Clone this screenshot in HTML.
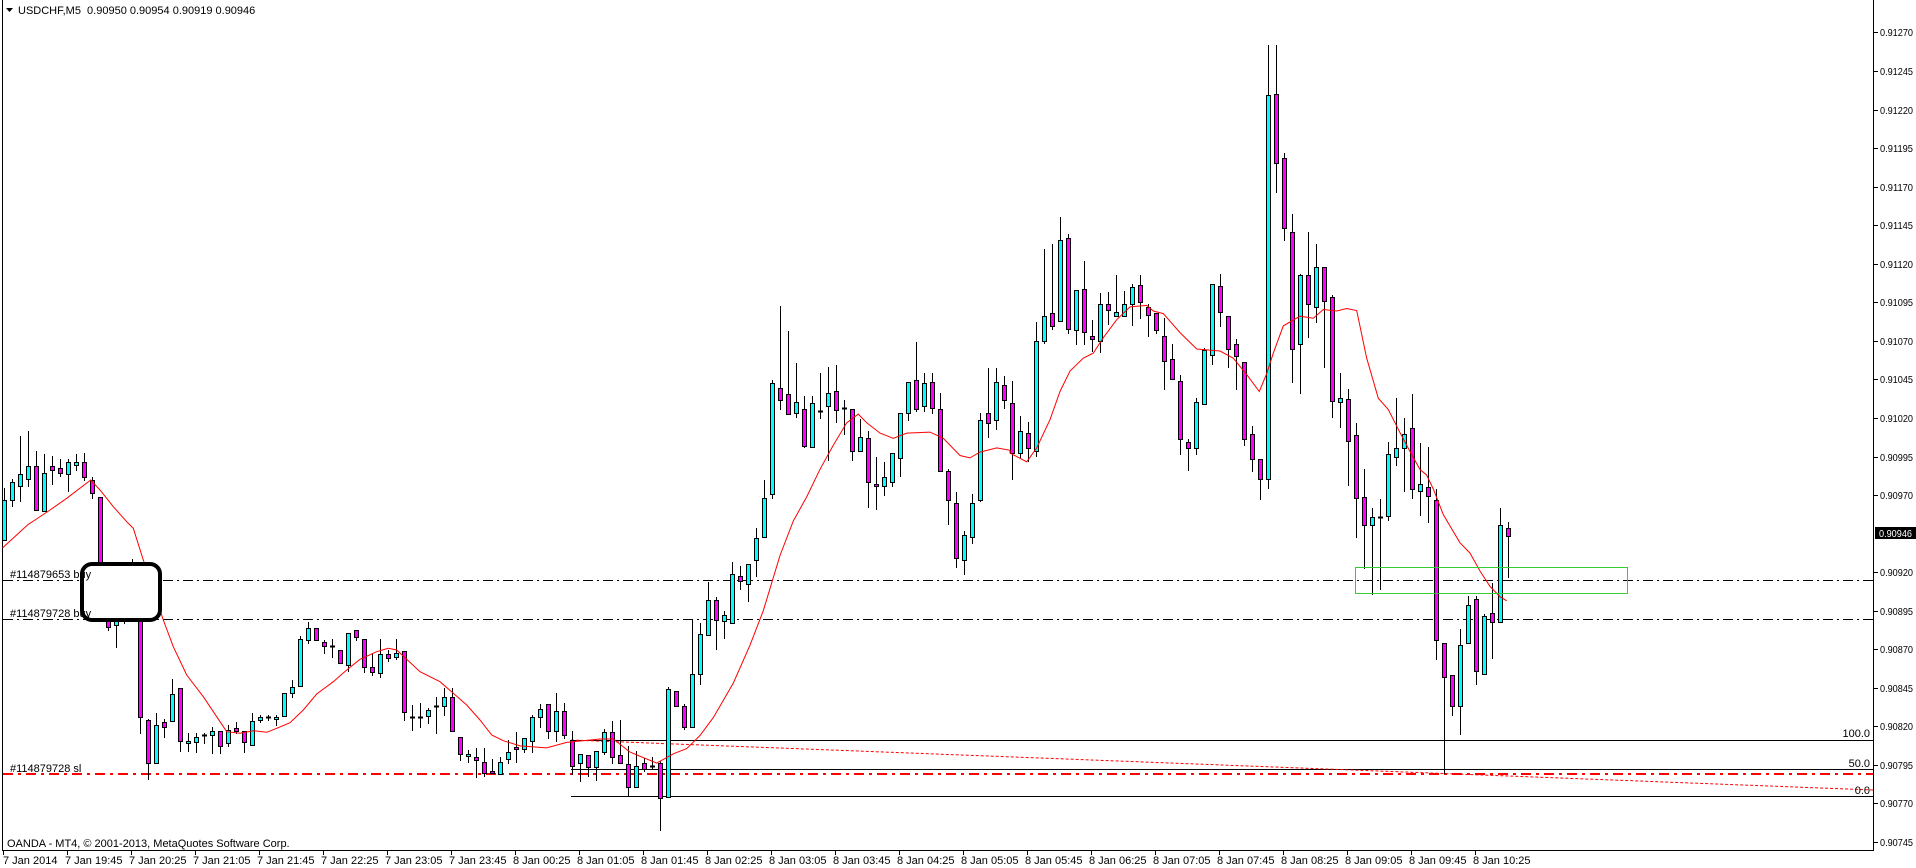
<!DOCTYPE html>
<html><head><meta charset="utf-8">
<style>
html,body{margin:0;padding:0;background:#fff;width:1916px;height:868px;overflow:hidden}
svg{display:block}
text{font-family:"Liberation Sans",sans-serif;font-size:11px;fill:#000}
</style></head>
<body>
<svg id="s" width="1916" height="868" xmlns="http://www.w3.org/2000/svg">
<rect width="1916" height="868" fill="#fff"/>
<g id="g"></g>
</svg>
<script>
var s1=[
['C',240,360,205,360],['C',187,240,178,257],['C',163,197,48,242],['C',139,178,33,197],
['M',139,270,93,270],['C',160,274,102,274],['M',139,151,108,192],['M',145,160,118,169],
['C',127,163,118,212],['C',127,136,102,151],['M',127,172,99,180],['M',181,220,172,233],
['M',230,560,230,560],['M',600,620,595,630],['C',600,615,595,680],['D',590,592,570,610],
['M',440,540,418,560],['M',540,890,530,940],
['M',900,1030,897,1078],['C',915,1028,880,1028],['M',907,920,898,952],['C',823,902,778,902],
['M',805,962,805,992],['C',962,970,940,992],['C',952,967,940,995],['D',945,946,940,970],
['C',932,944,920,1000],['M',934,978,934,1000],['C',930,970,915,978],['M',925,932,907,940],
['M',934,967,934,995],['C',902,976,880,976],['C',892,900,885,907],['D',892,893,885,900],
['C',892,898,885,915],['C',820,889,820,889],['C',800,820,780,832],['C',658,799,648,799],
['C',625,660,605,670],['M',625,660,625,660],['M',667,677,660,700],['D',679,680,658,710],
['M',690,730,690,730],['C',640,735,640,752],['M',631,652,631,660],['M',658,740,658,755],
['M',740,755,700,765],['C',703,760,658,770],['M',703,713,690,722],['C',700,712,658,718],
['M',693,875,693,900],['D',890,891,855,930],['D',890,891,850,920],['C',870,889,865,910],
['D',858,859,830,940],['C',832,858,805,885],['M',832,934,805,934],['M',950,1002,950,1020],
['C',1002,1008,990,1025],['M',1010,1020,985,1070],['M',1027,1060,985,1068],['M',1053,1060,1018,1060],
['C',1027,1062,1010,1062],['C',995,1018,960,1028]];
var s2=[
['M',1325,1332,1282,1368],['C',1300,1330,1300,1340],['C',1238,1308,1232,1340],['C',1215,1238,1200,1268],
['M',1200,1280,1200,1298],['C',1222,1280,1170,1308],['M',1222,1290,1197,1300],['M',1305,1380,1278,1405],
['C',1345,1372,1345,1425],['M',1348,1384,1348,1410],['C',1338,1384,1338,1420],['C',1282,1340,1273,1345],
['M',1282,1355,1250,1372],['M',1348,1372,1247,1372],['M',1374,1440,1322,1465],['C',1380,1440,1337,1440],
['M',1372,1390,1357,1395],['D',1381,1382,1355,1385],['M',1372,1472,1365,1565],['C',1157,1470,1150,1470],
['M',1163,1206,1163,1206],['M',1206,1267,1200,1273],['C',1113,1267,957,1267],['C',997,1113,965,1143],
['C',898,1000,848,1000],['M',898,957,890,1040],['C',942,960,932,1008],['C',823,965,790,965],
['M',830,843,800,868],['C',795,852,795,902],['C',718,782,690,828],['C',602,715,552,715],
['C',270,593,262,603],['M',285,320,45,345],['M',303,361,120,361],['C',325,358,212,368],
['M',344,452,308,455],['C',329,454,308,454],['D',350,351,240,370],['C',300,335,223,493],
['M',292,349,218,384],['D',343,344,318,418],['M',344,468,344,494],['C',425,468,375,468],
['M',428,558,408,630],['M',562,567,485,635],['C',543,567,500,595],['C',474,558,474,568],
['C',358,487,358,540],['C',268,358,268,378],['M',260,344,150,352],['C',270,335,240,352],
['M',268,341,240,358],['M',344,526,298,526],['M',526,608,518,678],['M',617,776,585,803],
['C',710,782,698,825],['C',619,715,592,735],['C',376,608,357,612],['M',358,387,225,427],
['C',268,376,225,403]];
var s3=[
['M',693,722,675,737],['M',727,825,685,875],['C',781,825,753,835],['M',786,815,765,840],
['C',607,820,570,830],['C',558,607,428,610],['M',552,578,418,583],['C',410,568,365,568],
['M',405,583,398,590],['C',507,585,507,612],['M',505,588,451,612],['M',597,603,565,625],
['C',534,607,513,628],['M',534,546,510,573],['C',549,557,478,557],['C',534,558,509,558],
['C',501,534,495,575],['M',497,530,478,562],['M',541,556,535,597],['M',552,585,552,590],
['M',597,646,562,700],['M',642,681,612,681],['M',685,798,673,826],['M',803,816,797,858],
['C',726,816,717,826],['C',624,729,620,729],['C',495,633,495,652],['M',500,550,476,578],
['M',558,623,558,658],['M',613,636,603,700],['M',648,797,648,810],['M',787,836,773,860],
['M',836,876,836,915],['C',126,875,30,893],['M',124,260,30,315],['M',250,386,240,410],
['M',393,623,358,687],['C',478,613,475,707],['M',477,534,393,598],['C',462,540,417,570],
['M',462,528,462,658],['M',521,723,517,755],['C',717,725,668,775],['M',719,802,700,888],
['M',790,913,767,988],['M',910,965,857,1050],['C',950,965,932,1100],['D',950,955,915,1090],
['C',826,948,804,955],['C',815,832,718,848],['C',787,815,757,898],['M',776,895,710,913],
['C',886,898,805,945],['M',892,908,813,960],['M',916,1190,895,1227],['M',1195,1262,1195,1448],
['M',1257,1318,1257,1335],['C',1200,1318,1168,1373],['C',1122,1196,1103,1196],['M',1110,1250,1103,1275],
['C',1143,1256,1138,1256],['M',1137,1155,1078,1225],['C',965,1155,932,1155],['M',972,987,960,1067]];

var out=[];
function L(x1,y1,x2,y2,st){out.push('<line x1="'+x1+'" y1="'+y1+'" x2="'+x2+'" y2="'+y2+'" '+st+'/>');}
function T(x,y,t,extra){out.push('<text x="'+x+'" y="'+y+'" '+(extra||'')+'>'+t+'</text>');}

L(2.5,0,2.5,850.5,'stroke="#000" stroke-width="1"');
L(2,850.5,1874,850.5,'stroke="#000" stroke-width="1"');
L(1873.5,0,1873.5,851,'stroke="#000" stroke-width="1"');

L(571,740.5,1873,740.5,'stroke="#000"');
L(571,769.5,1873,769.5,'stroke="#000"');
L(571,796.5,1873,796.5,'stroke="#000"');
L(571,740,1873,790,'stroke="#f00" stroke-dasharray="3,2"');
L(3,580.5,1873,580.5,'stroke="#000" stroke-dasharray="10,4,2,4"');
L(3,619.5,1873,619.5,'stroke="#000" stroke-dasharray="10,4,2,4"');
L(3,774,1873,774,'stroke="#f00" stroke-width="2" stroke-dasharray="10,5,3,5"');

var ma=[];
[[8,383],[85,313],[105,300],[150,270],[200,235],[272,180],[300,210],[340,260],[380,305],[400,325],[430,420],[490,600],[520,680],[560,765],[610,830],[650,890],[680,935],[720,940],[760,932],[800,937],[830,925],[870,908],[910,870],[950,822],[1000,785],[1040,750],[1080,718],[1130,695],[1165,685],[1190,690],[1220,718],[1260,755],[1320,785],[1360,820],[1400,855],[1440,900],[1475,945],[1510,962]].forEach(function(p){ma.push([p[0]/3,420+p[1]/3]);});
[[60,1322],[140,1328],[200,1312],[300,1302],[340,1302],[390,1340],[470,1372],[520,1345],[560,1330],[600,1292],[640,1240],[700,1140],[750,1030],[790,930],[840,770],[880,670],[920,600],[960,520],[1000,450],[1040,385],[1075,360],[1100,385],[1140,415],[1180,430],[1220,415],[1290,412],[1330,430],[1380,480],[1410,487],[1440,470],[1490,458],[1530,465]].forEach(function(p){ma.push([500+p[0]/3,290+p[1]/2.9]);});
[[30,825],[80,842],[110,815],[150,760],[180,705],[210,665],[250,640],[280,630],[310,600],[350,565],[390,540],[440,537],[460,548],[490,553],[540,590],[590,622],[660,626],[700,640],[740,672],[778,705],[800,670],[820,630],[850,577],[900,558],[940,562],[970,545],[1010,548],[1040,543],[1070,547],[1100,640],[1135,718],[1165,740],[1200,785],[1230,822],[1260,857],[1280,868],[1300,895],[1330,945],[1380,1000],[1410,1020],[1440,1055],[1470,1085],[1500,1105],[1520,1113]].forEach(function(p){ma.push([1000+p[0]/3,30+p[1]/1.95]);});

function drawSeg(arr,base,f){
  arr.forEach(function(c,k){
    var i=base+k, x=4+8*i;
    var a=Math.round(f(c[1])),b=Math.round(f(c[2])),wt=Math.round(f(c[3])),wb=Math.round(f(c[4]));
    if(wt>a)wt=a; if(wb<b)wb=b;
    L(x+0.5,wt,x+0.5,wb+1,'stroke="#000"');
    if(c[0]=='D'||b-a<2){L(x-2,a+0.5,x+3,a+0.5,'stroke="#000" stroke-width="2"');}
    else{out.push('<rect x="'+(x-1.5)+'" y="'+(a+0.5)+'" width="4" height="'+(b-a)+'" fill="'+(c[0]=='C'?'#0ff':'#f0f')+'" stroke="#000" stroke-width="1"/>');}
  });
}
drawSeg(s1,0,function(y){return 420+y/3;});
drawSeg(s2,64,function(y){return 290+y/2.9;});
drawSeg(s3,125,function(y){return 30+y/1.95;});

out.push('<polyline fill="none" stroke="#f00" stroke-width="1" points="'+ma.map(function(p){return p[0].toFixed(1)+','+p[1].toFixed(1);}).join(' ')+'"/>');

out.push('<rect x="1355.5" y="567.5" width="272" height="26" fill="none" stroke="#3c3" stroke-width="1"/>');
out.push('<rect x="82" y="564" width="78" height="56" rx="10" ry="10" fill="#fff" stroke="#000" stroke-width="4"/>');

T(10,578,'#114879653 buy');
T(10,617,'#114879728 buy');
T(10,772,'#114879728 sl');
T(1870,737,'100.0','text-anchor="end"');
T(1870,767,'50.0','text-anchor="end"');
T(1870,794,'0.0','text-anchor="end"');
T(7,847,'OANDA - MT4, © 2001-2013, MetaQuotes Software Corp.');
out.push('<path d="M6,8 L13,8 L9.5,12 Z" fill="#000"/>');
T(18,14,'USDCHF,M5&#160;&#160;0.90950 0.90954 0.90919 0.90946');

var prices=['0.91270','0.91245','0.91220','0.91195','0.91170','0.91145','0.91120','0.91095','0.91070','0.91045','0.91020','0.90995','0.90970','0.90945','0.90920','0.90895','0.90870','0.90845','0.90820','0.90795','0.90770','0.90745'];
prices.forEach(function(p,k){
  var y=Math.round(842-(21-k)*38.55);
  if(p=='0.90945')return;
  L(1874,y+0.5,1878,y+0.5,'stroke="#000"');
  T(1880,y+4,p,'textLength="33" lengthAdjust="spacingAndGlyphs" style="font-size:10.5px"');
});
out.push('<rect x="1875" y="527" width="41" height="12" fill="#000"/>');
T(1879,537,'0.90946','textLength="33" lengthAdjust="spacingAndGlyphs" style="fill:#fff;font-size:10.5px"');

var times=['7 Jan 2014','7 Jan 19:45','7 Jan 20:25','7 Jan 21:05','7 Jan 21:45','7 Jan 22:25','7 Jan 23:05','7 Jan 23:45','8 Jan 00:25','8 Jan 01:05','8 Jan 01:45','8 Jan 02:25','8 Jan 03:05','8 Jan 03:45','8 Jan 04:25','8 Jan 05:05','8 Jan 05:45','8 Jan 06:25','8 Jan 07:05','8 Jan 07:45','8 Jan 08:25','8 Jan 09:05','8 Jan 09:45','8 Jan 10:25'];
times.forEach(function(t,k){
  var x=3+64*k;
  L(x+0.5,851,x+0.5,855,'stroke="#000"');
  T(x+(k==0?0:-2),864,t);
});

document.getElementById('g').innerHTML=out.join('');
</script>
</body></html>
